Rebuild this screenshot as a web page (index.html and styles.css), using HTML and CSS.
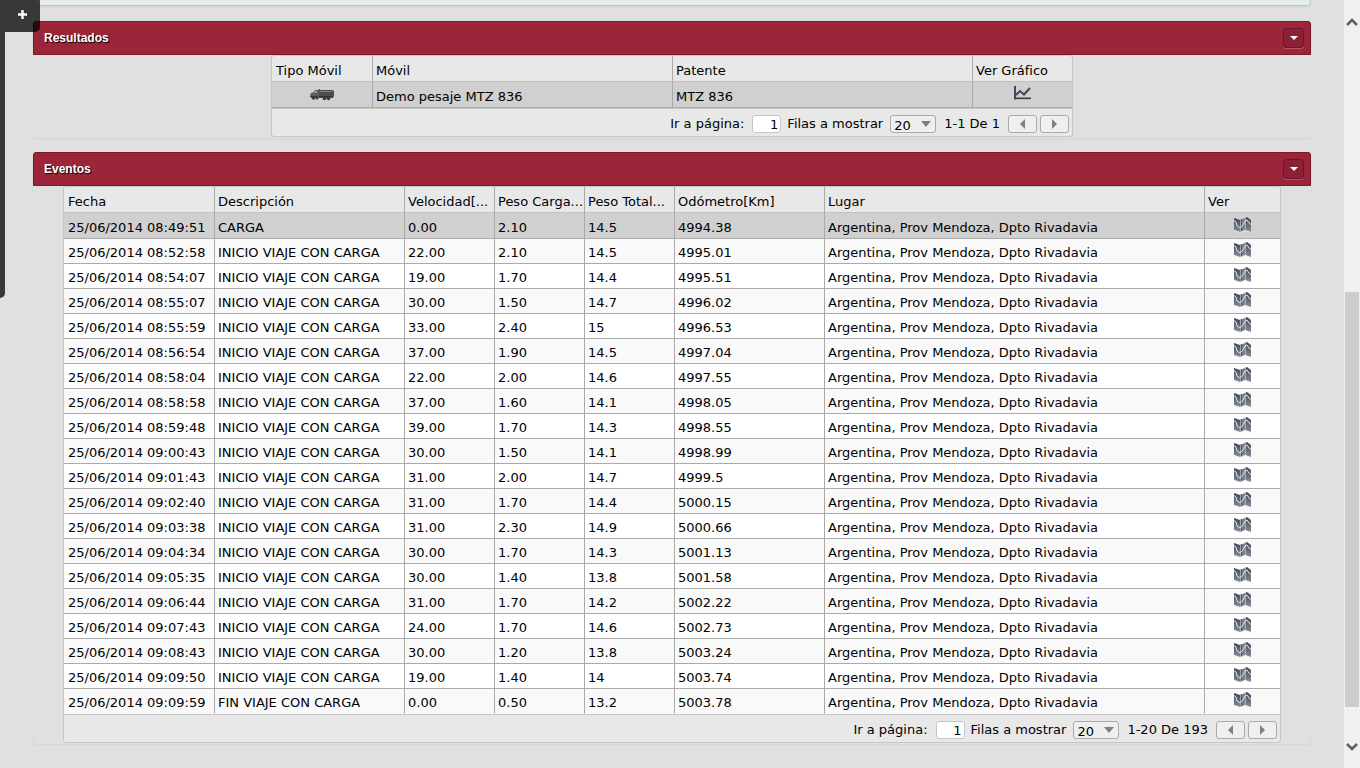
FILE: index.html
```
<!DOCTYPE html>
<html lang="es">
<head>
<meta charset="utf-8">
<title>Eventos</title>
<link rel="stylesheet" href="styles.css">
</head>
<body>
<svg class="sprite" aria-hidden="true">
  <defs>
    <linearGradient id="map-shade" x1="0" y1="0" x2="0" y2="1">
      <stop offset="0" stop-color="#414856"/>
      <stop offset="1" stop-color="#868c98"/>
    </linearGradient>
  </defs>
  <symbol id="icon-map" viewBox="0 0 17 16">
    <path d="M0 1l6 2v12l-6-2z" fill="url(#map-shade)"/>
    <path d="M6 3l5-2v12l-5 2z" fill="#7a818e"/>
    <path d="M6 3l2-1v12l-2 1z" fill="#525967"/>
    <path d="M11 1l2-1 4 3v12l-6-2z" fill="url(#map-shade)"/>
    <path d="M6.500 3v12M11.500 1v12" stroke="#d4d7dc" stroke-width=".6"/>
    <path d="M0 3.500l2 1.500 1 4 3 2 3-3 2-4 2-1 2 3 2 1.500" fill="none" stroke="#e2e4e8" stroke-width="1"/>
    <path d="M0 13.500l6 2 5-2 6 2" fill="none" stroke="#eceded" stroke-width=".8"/>
  </symbol>
  <symbol id="icon-chart" viewBox="0 0 17 14">
    <path d="M1 0v12.500h16" fill="none" stroke="#343b4a" stroke-width="1.800"/>
    <path d="M2 9l4-4 4 3.500 6-6.500" fill="none" stroke="#414858" stroke-width="2"/>
    <path d="M2 13.700h15" stroke="#f4f4f4" stroke-width=".6"/>
  </symbol>
  <symbol id="icon-truck" viewBox="0 0 24 12">
    <path d="M0 6l1-2 3-1 1-2h3l1-1h1v9H1z" fill="#5c5c5c"/>
    <path d="M4 4l1-2h2v2z" fill="#999"/>
    <path d="M9 1h13l2 1v5l-1 2H9z" fill="#4c4c4c"/>
    <path d="M10 2h12v1H10z" fill="#858585"/>
    <path d="M9 7h14v1H9z" fill="#333"/>
    <path d="M0 7h8v1H0z" fill="#3c3c3c"/>
    <g fill="#383838"><circle cx="3.500" cy="9" r="1.800"/><circle cx="7" cy="9" r="1.500"/><circle cx="14.500" cy="9.500" r="1.800"/><circle cx="18.500" cy="9.500" r="1.800"/></g>
  </symbol>
</svg>

<div class="page">
  <main class="content">
    <div class="filters"></div>

    <section class="panel">
      <header class="panel-header">
        <h2>Resultados</h2>
        <button class="toggle" type="button" aria-label="Contraer Resultados"><span class="caret"></span></button>
      </header>
      <div class="panel-body">
        <div class="grid grid-results">
          <table>
            <colgroup><col class="w101"><col class="w300"><col class="w300"><col></colgroup>
            <thead><tr><th>Tipo Móvil</th><th>Móvil</th><th>Patente</th><th>Ver Gráfico</th></tr></thead>
            <tbody>
              <tr class="selected">
                <td class="icon-cell"><svg class="icon-truck" role="img" aria-label="Camión"><use href="#icon-truck"/></svg></td>
                <td>Demo pesaje MTZ 836</td>
                <td>MTZ 836</td>
                <td class="icon-cell"><button class="icon-button" type="button" aria-label="Ver gráfico"><svg class="icon-chart"><use href="#icon-chart"/></svg></button></td>
              </tr>
            </tbody>
          </table>
          <div class="pager">
            <label for="page-results">Ir a página:</label>
            <input id="page-results" type="text" value="1">
            <label for="rows-results">Filas a mostrar</label>
            <span class="select"><select id="rows-results"><option>20</option><option>50</option></select></span>
            <span class="range">1-1 De 1</span>
            <button class="step" type="button" aria-label="Anterior"><span class="prev"></span></button>
            <button class="step" type="button" aria-label="Siguiente"><span class="next"></span></button>
          </div>
        </div>
      </div>
    </section>

    <section class="panel">
      <header class="panel-header">
        <h2>Eventos</h2>
        <button class="toggle" type="button" aria-label="Contraer Eventos"><span class="caret"></span></button>
      </header>
      <div class="panel-body">
        <div class="grid grid-events">
          <table>
            <colgroup><col class="w151"><col class="w190"><col class="w90"><col class="w90"><col class="w90"><col class="w150"><col class="w380"><col></colgroup>
            <thead><tr><th>Fecha</th><th>Descripción</th><th>Velocidad[...</th><th>Peso Carga...</th><th>Peso Total...</th><th>Odómetro[Km]</th><th>Lugar</th><th>Ver</th></tr></thead>
            <tbody id="events"></tbody>
          </table>
          <div class="pager">
            <label for="page-events">Ir a página:</label>
            <input id="page-events" type="text" value="1">
            <label for="rows-events">Filas a mostrar</label>
            <span class="select"><select id="rows-events"><option>20</option><option>50</option></select></span>
            <span class="range">1-20 De 193</span>
            <button class="step" type="button" aria-label="Anterior"><span class="prev"></span></button>
            <button class="step" type="button" aria-label="Siguiente"><span class="next"></span></button>
          </div>
        </div>
      </div>
    </section>
  </main>

  <div class="scrollbar" aria-hidden="true">
    <svg class="chevron" viewBox="0 0 12 8"><path d="M1 7l5-5 5 5" fill="none" stroke="#606060" stroke-width="2.500"/></svg>
    <div class="track"><div class="thumb"></div></div>
    <svg class="chevron" viewBox="0 0 12 8"><path d="M1 1l5 5 5-5" fill="none" stroke="#606060" stroke-width="2.500"/></svg>
  </div>
</div>

<aside class="drawer">
  <button class="drawer-tab" type="button" aria-label="Abrir menú"><svg viewBox="0 0 9 9"><path d="M4.500 0v9M0 4.500h9" stroke="#fff" stroke-width="2.400"/></svg></button>
  <div class="drawer-edge"></div>
</aside>
<script src="script.js"></script>
</body>
</html>
```

FILE: styles.css
```
* { box-sizing: border-box; }

body {
  margin: 0;
  height: 100vh;
  overflow: hidden;
  background: #e0e0e0;
  color: #000;
  font: 13px/18px Verdana, "DejaVu Sans", sans-serif;
}

button, input, select { font: inherit; color: inherit; margin: 0; padding: 0; }

.sprite { position: absolute; width: 0; height: 0; }

.page { display: flex; height: 100%; }
.content { flex: 1; padding: 0 33px; overflow: hidden; }

.filters {
  height: 6px;
  margin-bottom: 15px;
  background: #e7ecee;
  border: 1px solid #b7c5cf;
  border-top: 0;
  border-radius: 0 0 4px 4px;
  box-shadow: 0 2px 2px #d8d8d8;
}

.panel {
  margin-bottom: 14px;
  border-radius: 3px;
  box-shadow: 0 1px 2px #d2d2d2;
}

.panel-header {
  display: flex;
  align-items: center;
  justify-content: space-between;
  height: 34px;
  padding: 0 6px 0 10px;
  background: #9d253a;
  border: 1px solid #7c1a2c;
  border-radius: 3px 3px 0 0;
}

.panel-header h2 {
  margin: 0;
  color: #fff;
  font: bold 12px/16px "Liberation Sans", Arial, sans-serif;
  text-shadow: 1px 1px 1px #000;
}

.toggle {
  display: flex;
  align-items: center;
  justify-content: center;
  width: 21px;
  height: 20px;
  background: #8c2035;
  border: 1px solid #6c1526;
  border-radius: 3px;
  box-shadow: 0 1px 0 #b25566;
}

.caret {
  border: 4px solid transparent;
  border-top-color: #fff;
  border-bottom: 0;
}

.panel-body {
  display: flex;
  justify-content: center;
  padding-bottom: 1px;
}

.grid {
  border: 1px solid #c6c6c6;
  border-radius: 3px;
  background: #e8e8e8;
}
.grid-results { width: 802px; }
.grid-events { width: 1218px; }

table {
  width: 100%;
  table-layout: fixed;
  border-collapse: separate;
  border-spacing: 0;
}

.w90 { width: 90px; }
.w101 { width: 101px; }
.w150 { width: 150px; }
.w151 { width: 151px; }
.w190 { width: 190px; }
.w300 { width: 300px; }
.w380 { width: 380px; }

th, td {
  height: 25px;
  padding: 4px 0 0 3px;
  border-right: 1px solid #aaa;
  border-bottom: 1px solid #aaa;
  font-weight: normal;
  text-align: left;
  white-space: nowrap;
  vertical-align: middle;
}
th { height: 26px; border-bottom-color: #c2c2c2; }
th:first-child, td:first-child { padding-left: 4px; }
th:last-child, td:last-child { border-right: 0; }

tbody tr { background: #fff; }
tbody tr:nth-child(even) { background: #f9f9f9; }
tbody tr.selected { background: #d0d0d0; }
.selected td { height: 26px; }
.grid-events tbody tr:last-child td { border-bottom-color: #f9f9f9; }

td.icon-cell, td.icon-cell:first-child { padding: 0; text-align: center; }
.icon-button {
  display: block;
  margin: 0 auto;
  background: none;
  border: 0;
}
svg { display: block; }
.icon-map { width: 17px; height: 16px; margin-bottom: 2px; }
.icon-chart { width: 17px; height: 14px; margin-bottom: 4px; }
.icon-truck { width: 24px; height: 12px; margin: 0 auto; }

.pager {
  display: flex;
  align-items: center;
  justify-content: flex-end;
  height: 28px;
  padding: 3px 3px 0 0;
  border-top: 1px solid #c6c6c6;
}

.pager input {
  width: 29px;
  height: 18px;
  margin: 0 6px 0 8px;
  padding: 2px 2px 0 0;
  border: 1px solid #c6c6c6;
  border-radius: 3px;
  background: #fff;
  text-align: right;
}

.select { position: relative; margin: 0 8px 0 7px; }
.select::after {
  content: "";
  position: absolute;
  top: 6px;
  right: 5px;
  border: 5px solid transparent;
  border-top: 6px solid #808080;
  border-bottom: 0;
  pointer-events: none;
}
.select select {
  appearance: none;
  display: block;
  width: 46px;
  height: 18px;
  padding: 1px 0 0 3px;
  border: 1px solid #aaa;
  border-radius: 3px;
  background: #efefef;
}

.range { margin-right: 5px; }

.step {
  display: flex;
  align-items: center;
  justify-content: center;
  width: 29px;
  height: 18px;
  margin-left: 3px;
  border: 1px solid #aaa;
  border-radius: 3px;
  background: #efefef;
}
.prev, .next { border: 5px solid transparent; }
.prev { border-left: 0; border-right-color: #808080; }
.next { border-right: 0; border-left-color: #808080; }

.scrollbar {
  display: flex;
  flex-direction: column;
  align-items: center;
  width: 16px;
  padding: 18px 0 17px;
  background: #f0f0f0;
}
.chevron { width: 12px; height: 8px; }
.track {
  display: flex;
  flex: 1;
  align-items: flex-end;
  width: 14px;
  padding-bottom: 36px;
}
.thumb { width: 100%; height: 61%; background: #cdcdcd; }

.drawer { position: fixed; top: 0; left: 0; }
.drawer-tab {
  display: flex;
  align-items: center;
  justify-content: center;
  width: 40px;
  height: 32px;
  padding: 0 0 4px 4px;
  border: 0;
  border-radius: 0 0 5px 0;
  background: rgba(0, 0, 0, .75);
}
.drawer-tab svg { width: 9px; height: 9px; }
.drawer-edge {
  width: 5px;
  height: 266px;
  border-radius: 0 0 5px 0;
  background: rgba(0, 0, 0, .75);
}
```

FILE: script.js
```
const trip = "INICIO VIAJE CON CARGA";
const place = "Argentina, Prov Mendoza, Dpto Rivadavia";
const events = [
  ["08:49:51", "CARGA", "0.00", "2.10", "14.5", "4994.38"],
  ["08:52:58", trip, "22.00", "2.10", "14.5", "4995.01"],
  ["08:54:07", trip, "19.00", "1.70", "14.4", "4995.51"],
  ["08:55:07", trip, "30.00", "1.50", "14.7", "4996.02"],
  ["08:55:59", trip, "33.00", "2.40", "15", "4996.53"],
  ["08:56:54", trip, "37.00", "1.90", "14.5", "4997.04"],
  ["08:58:04", trip, "22.00", "2.00", "14.6", "4997.55"],
  ["08:58:58", trip, "37.00", "1.60", "14.1", "4998.05"],
  ["08:59:48", trip, "39.00", "1.70", "14.3", "4998.55"],
  ["09:00:43", trip, "30.00", "1.50", "14.1", "4998.99"],
  ["09:01:43", trip, "31.00", "2.00", "14.7", "4999.5"],
  ["09:02:40", trip, "31.00", "1.70", "14.4", "5000.15"],
  ["09:03:38", trip, "31.00", "2.30", "14.9", "5000.66"],
  ["09:04:34", trip, "30.00", "1.70", "14.3", "5001.13"],
  ["09:05:35", trip, "30.00", "1.40", "13.8", "5001.58"],
  ["09:06:44", trip, "31.00", "1.70", "14.2", "5002.22"],
  ["09:07:43", trip, "24.00", "1.70", "14.6", "5002.73"],
  ["09:08:43", trip, "30.00", "1.20", "13.8", "5003.24"],
  ["09:09:50", trip, "19.00", "1.40", "14", "5003.74"],
  ["09:09:59", "FIN VIAJE CON CARGA", "0.00", "0.50", "13.2", "5003.78"]
];

document.getElementById("events").innerHTML = events.map(([time, ...rest], i) => {
  const cells = ["25/06/2014 " + time, ...rest, place].map(text => `<td>${text}</td>`).join("");
  return `<tr${i === 0 ? ' class="selected"' : ""}>${cells}<td class="icon-cell"><button class="icon-button" type="button" aria-label="Ver en mapa"><svg class="icon-map"><use href="#icon-map"/></svg></button></td></tr>`;
}).join("");
```
